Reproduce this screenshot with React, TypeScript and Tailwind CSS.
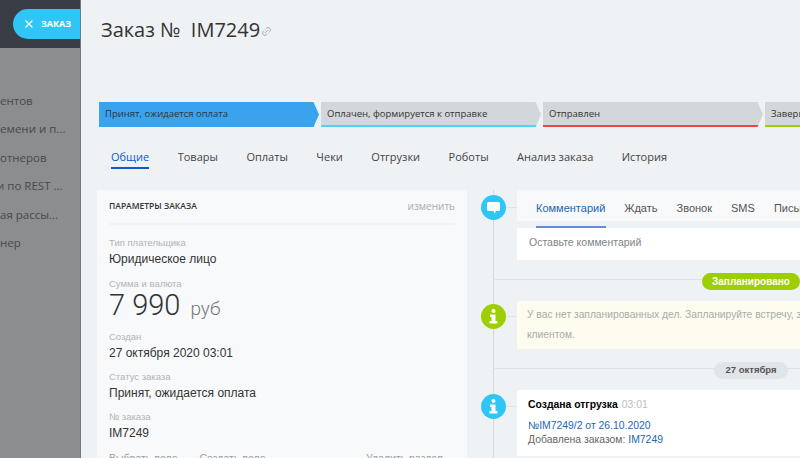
import React from "react";
import { X, Link2 } from "lucide-react";

const menu = [
  { name: "ентов", cls: "" },
  { name: "емени и п...", cls: "" },
  { name: "отнеров", cls: "" },
  { name: "и по REST ...", cls: "-ml-[3px]" },
  { name: "ая рассы...", cls: "" },
  { name: "нер", cls: "" },
];
const steps = [
  { name: "Принят, ожидается оплата", bg: "bg-[#39a3ee]", line: "bg-[#39a3ee]" },
  { name: "Оплачен, формируется к отправке", bg: "bg-[#d3d6da]", line: "bg-[#55d0f5]" },
  { name: "Отправлен", bg: "bg-[#d3d6da]", line: "bg-[#f0434c]" },
  { name: "Завершен", bg: "bg-[#d3d6da]", line: "bg-[#9dcf00]" },
];
const tabs = ["Общие", "Товары", "Оплаты", "Чеки", "Отгрузки", "Роботы", "Анализ заказа", "История"];
const fields = [
  { label: "Создан", value: "27 октября 2020 03:01", mt: "mt-[11px]" },
  { label: "Статус заказа", value: "Принят, ожидается оплата", mt: "mt-[9px]" },
  { label: "№ заказа", value: "IM7249", mt: "mt-[9px]" },
];

const Bubble = ({ color, children }: { color: string; children: React.ReactNode }) => (
  <div className="flex shrink-0 items-center">
    <div className={`flex h-[25px] w-[25px] items-center justify-center rounded-full ${color}`}>{children}</div>
    <div className="h-px w-[11px] bg-[#dfe3e6]" />
  </div>
);

const InfoIcon = () => (
  <svg width="9" height="15" viewBox="0 0 9 15" fill="#fff">
    <circle cx="4.5" cy="2" r="2" />
    <path d="M1 5.5h5.5V12H8.500v2.500H.5V12h2V8H1z" />
  </svg>
);

const Divider = ({ children, pr }: { children: React.ReactNode; pr: string }) => (
  <div className={`flex h-[18px] items-center justify-end ${pr}`}>{children}</div>
);

export default function App() {
  return (
    <div className="flex h-[458px] w-[800px] overflow-hidden bg-[#eef2f4] font-['Open_Sans',sans-serif]">
      {/* dimmed left menu */}
      <aside className="flex h-full w-[81px] shrink-0 flex-col border-r border-[#777a7c] bg-[#8b8d8f]">
        <div className="flex h-[48px] items-center justify-end bg-[#393e46] pl-[13px]">
          <div className="flex h-[30px] w-full items-center gap-[6px] rounded-l-full bg-[#2fc6f6] pl-[10px] text-[9px] font-bold text-white">
            <X size={12} strokeWidth={2.5} />
            ЗАКАЗ
          </div>
        </div>
        <div className="flex flex-col gap-[8.4px] pt-[43px]">
          {menu.map((row, key) => (
            <div key={key} className="h-[20px] overflow-hidden whitespace-nowrap text-[11.500px] leading-[20px] text-[#484a4c]">
              <div className={row.cls}>{row.name}</div>
            </div>
          ))}
        </div>
      </aside>

      <main className="min-w-0 flex-1 overflow-hidden">
        <div className="flex h-[102px] items-start pl-[20px] pt-[15px]">
          <h1 className="text-[20px] leading-[30px] text-[#333]">
            Заказ №&nbsp; IM7249
          </h1>
          <Link2 size={11} className="ml-[1px] mt-[11px] -rotate-45 text-[#a9adb2]" />
        </div>

        {/* stages */}
        <div className="flex h-[25px] gap-[2px] pl-[18px]">
          {steps.map((row, key) => (
            <div
              key={key}
              className={`relative h-full w-[220px] shrink-0 pl-[6px] text-[9.500px] leading-[24px] text-[#333] [clip-path:polygon(0_0,97.500%_0,100%_50%,97.500%_100%,0_100%)] ${row.bg}`}
            >
              {row.name}
              <div className={`absolute bottom-0 left-0 h-[2px] w-[216px] ${row.line}`} />
            </div>
          ))}
        </div>

        {/* tabs */}
        <nav className="flex gap-[28.5px] pl-[30px] pt-[21px]">
          {tabs.map((row, key) => (
            <div
              key={key}
              className={`h-[21px] whitespace-nowrap border-b-2 text-[11px] leading-[18px] ${
                key === 0 ? "border-[#1058d0] text-[#1058d0]" : "border-transparent text-[#444]"
              }`}
            >
              {row}
            </div>
          ))}
        </nav>

        <div className="flex gap-[14px] pl-[16px] pt-[21px]">
          {/* order params */}
          <section className="w-[370px] shrink-0 bg-[#f8f9fb] px-[12px] font-['Liberation_Sans',sans-serif]">
            <div className="flex h-[35px] items-center justify-between border-b-2 border-[#f0f2f4] font-['Open_Sans',sans-serif]">
              <span className="text-[8.500px] font-semibold text-[#333]">ПАРАМЕТРЫ ЗАКАЗА</span>
              <span className="text-[10px] text-[#a9abad]">изменить</span>
            </div>
            <div className="pt-[11px]">
              <div className="text-[9.500px] leading-[14px] text-[#b0b4b8]">Тип плательщика</div>
              <div className="mt-[2px] text-[12px] leading-[15px] text-[#333]">Юридическое лицо</div>
              <div className="mt-[10px] text-[9.500px] leading-[14px] text-[#b0b4b8]">Сумма и валюта</div>
              <div className="flex h-[28px] items-baseline gap-[10px] font-['Roboto',sans-serif] font-light leading-[28px] text-[#333]">
                <span className="text-[29px]">7 990</span>
                <span className="text-[19px] text-[#777]">руб</span>
              </div>
              {fields.map((row, key) => (
                <div key={key} className={row.mt}>
                  <div className="text-[9.500px] leading-[14px] text-[#b0b4b8]">{row.label}</div>
                  <div className="mt-[2px] text-[12px] leading-[15px] text-[#333]">{row.value}</div>
                </div>
              ))}
              <div className="mt-[10px] flex justify-between pr-[12px] text-[10.500px] leading-[14px] text-[#9a9ea2]">
                <span className="flex gap-[22px]">
                  <span>Выбрать поле</span>
                  <span>Создать поле</span>
                </span>
                <span>Удалить раздел</span>
              </div>
            </div>
          </section>

          {/* timeline */}
          <section className="relative min-w-0 flex-1 font-['Liberation_Sans',sans-serif]">
            <div className="absolute bottom-0 left-[12px] top-0 w-px bg-[#d5d9dc]" />
            <div className="relative flex flex-col">
              <div className="flex items-start">
                <div className="pt-[5px]">
                  <Bubble color="bg-[#2fc6f6]">
                    <svg width="13" height="12" viewBox="0 0 13 12" fill="#fff">
                      <path d="M1.500 0h10A1.500 1.500 0 0 1 13 1.500v6A1.500 1.500 0 0 1 11.500 9H9l-1.500 2.500L6.500 9h-5A1.500 1.500 0 0 1 0 7.500v-6A1.500 1.500 0 0 1 1.500 0z" />
                    </svg>
                  </Bubble>
                </div>
                <div className="min-w-0 flex-1 overflow-hidden">
                  <div className="flex h-[31px] gap-[19px] whitespace-nowrap bg-[#f8f9fa] pl-[19px] text-[11px] leading-[36px] text-[#555]">
                    <span className="text-[#2067b0]">Комментарий</span>
                    <span>Ждать</span>
                    <span>Звонок</span>
                    <span>SMS</span>
                    <span>Письмо</span>
                  </div>
                  <div className="flex h-[7px] items-end bg-[#eef2f4] pl-[19px]">
                    <div className="h-[2px] w-[70px] bg-[#5f8fd8]" />
                  </div>
                  <div className="h-[32px] bg-white pl-[12px] text-[10.500px] leading-[28px] text-[#808488]">Оставьте комментарий</div>
                </div>
              </div>

              <div className="relative mt-[12px]">
                <div className="absolute left-[12px] right-0 top-[7px] h-px bg-[#dfe3e6]" />
                <Divider pr="pr-0">
                  <span className="relative flex h-[17px] w-[98px] items-center justify-center rounded-full bg-[#9dcf00] text-[10px] font-bold text-white">
                    Запланировано
                  </span>
                </Divider>
              </div>

              <div className="mt-[11px] flex items-start">
                <div className="pt-[3px]">
                  <Bubble color="bg-[#9dcf00]"><InfoIcon /></Bubble>
                </div>
                <div className="h-[48px] min-w-0 flex-1 overflow-hidden bg-[#fefcee] pl-[10px] text-[10.250px] leading-[20px] text-[#a9abad]">
                  <div className="whitespace-nowrap pt-[4px]">У вас нет запланированных дел. Запланируйте встречу, звонок</div>
                  <div>клиентом.</div>
                </div>
              </div>

              <div className="relative mt-[12px]">
                <div className="absolute left-[12px] right-0 top-[7px] h-px bg-[#dfe3e6]" />
                <Divider pr="pr-[12px]">
                  <span className="relative flex h-[17px] w-[74px] items-center justify-center rounded-full bg-[#dfe5e8] text-[9.500px] font-bold text-[#555]">
                    27 октября
                  </span>
                </Divider>
              </div>

              <div className="mt-[11px] flex items-start">
                <div className="pt-[4px]">
                  <Bubble color="bg-[#2fc6f6]"><InfoIcon /></Bubble>
                </div>
                <div className="h-[66px] min-w-0 flex-1 bg-white pl-[11px] pt-[7px] text-[10.400px]">
                  <div className="leading-[16px]">
                    <span className="font-bold text-black">Создана отгрузка</span>
                    <span className="ml-[4px] text-[#bbc0c4]">03:01</span>
                  </div>
                  <div className="mt-[6px] leading-[14px] text-[#2067b0]">№IM7249/2 от 26.10.2020</div>
                  <div className="leading-[14px] text-[#666]">
                    Добавлена заказом: <span className="text-[#2067b0]">IM7249</span>
                  </div>
                </div>
              </div>
            </div>
          </section>
        </div>
      </main>
    </div>
  );
}
